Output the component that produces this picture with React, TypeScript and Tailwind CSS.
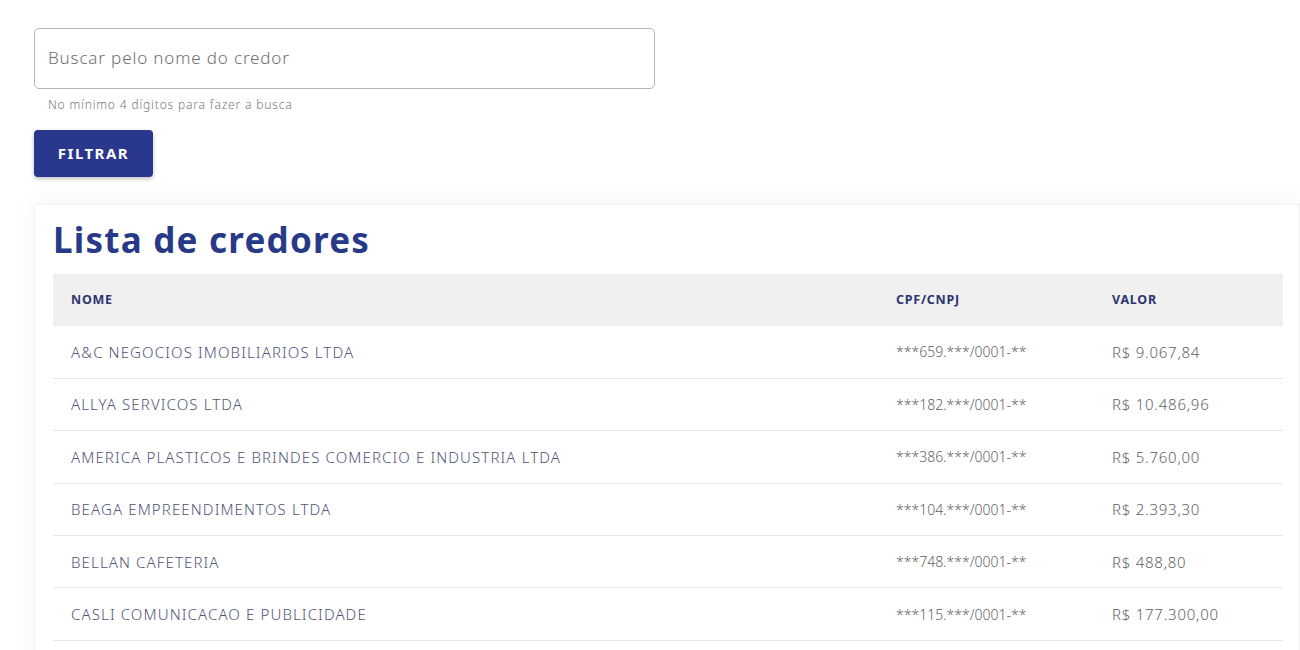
const credores = [
  { nome: 'A&C NEGOCIOS IMOBILIARIOS LTDA', doc: '***659.***/0001-**', valor: 'R$ 9.067,84' },
  { nome: 'ALLYA SERVICOS LTDA', doc: '***182.***/0001-**', valor: 'R$ 10.486,96' },
  { nome: 'AMERICA PLASTICOS E BRINDES COMERCIO E INDUSTRIA LTDA', doc: '***386.***/0001-**', valor: 'R$ 5.760,00' },
  { nome: 'BEAGA EMPREENDIMENTOS LTDA', doc: '***104.***/0001-**', valor: 'R$ 2.393,30' },
  { nome: 'BELLAN CAFETERIA', doc: '***748.***/0001-**', valor: 'R$ 488,80' },
  { nome: 'CASLI COMUNICACAO E PUBLICIDADE', doc: '***115.***/0001-**', valor: 'R$ 177.300,00' },
];

export default function App() {
  return (
    <div className="h-screen bg-white font-['Noto_Sans',sans-serif] overflow-hidden">
      <div className="pl-[34px] pt-[28px]">
        {/* Search */}
        <input
          type="text"
          placeholder="Buscar pelo nome do credor"
          className="w-[621px] h-[61px] rounded-[5px] border border-[#b5b5b5] px-[13px] pb-[3px] text-[17px] font-light tracking-[0.05em] text-[#444] placeholder:text-[#6f6f6f] outline-none"
        />
        <p className="mt-[6px] pl-[14px] text-[12px] leading-[20px] font-light tracking-[0.07em] text-[#777]">
          No mínimo 4 dígitos para fazer a busca
        </p>
        <button className="mt-[15px] h-[47px] w-[119px] rounded-[4px] bg-[#29378c] text-[15px] font-bold tracking-[0.1em] text-white shadow-[0_2px_4px_rgba(0,0,0,0.25)]">
          FILTRAR
        </button>

        {/* Lista de credores */}
        <div className="mt-[27px] border border-[#f1f1f1] bg-white pl-[18px] pt-[13px] pb-[60px] shadow-[0_-6px_24px_rgba(0,0,0,0.035)]">
          <h2 className="text-[35px] font-bold leading-[44px] tracking-[0.035em] text-[#283a87]">Lista de credores</h2>
          <table className="mt-[12px] w-[1230px] border-collapse text-left">
            <thead>
              <tr className="bg-[#f0f0f0]">
                <th className="h-[52px] w-[825px] pl-[18px] text-[12.5px] font-bold tracking-[0.06em] text-[#2d3570]">NOME</th>
                <th className="h-[52px] w-[216px] pl-[18px] text-[12.5px] font-bold tracking-[0.06em] text-[#2d3570]">CPF/CNPJ</th>
                <th className="h-[52px] pl-[18px] text-[12.5px] font-bold tracking-[0.06em] text-[#2d3570]">VALOR</th>
              </tr>
            </thead>
            <tbody>
              {credores.map((c) => (
                <tr key={c.nome} className="border-b border-[#e6e6e6]">
                  <td className="h-[52.4px] pl-[18px] text-[15px] font-light tracking-[0.075em] text-[#4f5478]">{c.nome}</td>
                  <td className="h-[52.4px] pl-[18px] text-[14px] font-light text-[#5f5f5f]">{c.doc}</td>
                  <td className="h-[52.4px] pl-[18px] text-[15px] font-light tracking-[0.05em] text-[#5f5f5f]">{c.valor}</td>
                </tr>
              ))}
            </tbody>
          </table>
        </div>
      </div>
    </div>
  );
}
